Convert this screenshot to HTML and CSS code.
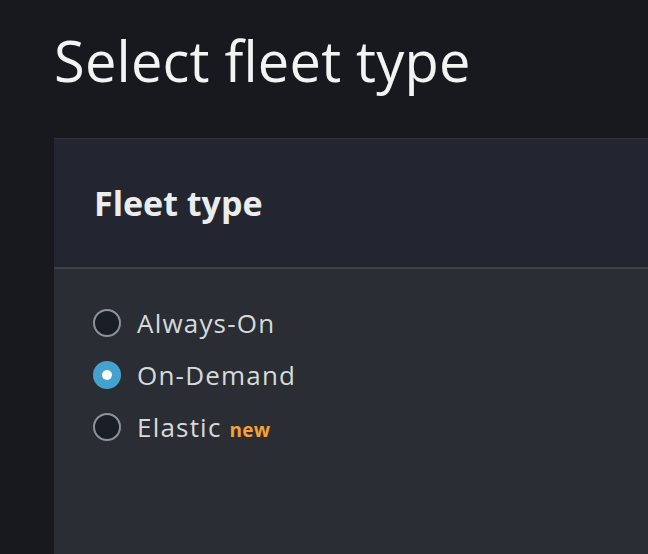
FILE: index.html
```html
<!DOCTYPE html>
<html>
<head>
<meta charset="utf-8">
<link rel="stylesheet" href="styles.css">
</head>
<body>
<div class="page">
  <h1 class="title">Select fleet type</h1>
  <div class="card">
    <div class="card-header">
      <h2 class="card-title">Fleet type</h2>
    </div>
    <div class="card-body">
      <label class="option">
        <span class="radio"></span>
        <span class="label">Always-On</span>
      </label>
      <label class="option">
        <span class="radio checked"></span>
        <span class="label">On-Demand</span>
      </label>
      <label class="option">
        <span class="radio"></span>
        <span class="label">Elastic <span class="badge">new</span></span>
      </label>
    </div>
  </div>
</div>
</body>
</html>
```

FILE: styles.css
```css
html, body {
  margin: 0;
  padding: 0;
  background: #17191e;
  height: 100%;
  overflow: hidden;
}
body {
  font-family: "Open Sans", "Noto Sans", sans-serif;
  color: #eaeded;
}
.page {
  padding: 20px 0 0 54px;
}
.title {
  margin: 0;
  font-size: 56px;
  font-weight: 500;
  line-height: 80px;
  letter-spacing: 0.2px;
  color: #f2f3f3;
}
.card {
  margin-top: 38px;
  background: #2a2d33;
  border-top: 1px solid #31353b;
  height: 420px;
}
.card-header {
  background: #232630;
  height: 128px;
  display: flex;
  align-items: center;
  padding-left: 40px;
  border-bottom: 2px solid #3c4148;
}
.card-title {
  margin: 0;
  font-size: 34px;
  font-weight: 700;
  letter-spacing: 0;
  color: #eaeded;
}
.card-body {
  padding: 40px 0 0 39px;
  display: flex;
  flex-direction: column;
  gap: 24px;
}
.option {
  display: flex;
  align-items: center;
  height: 28px;
  gap: 16px;
}
.radio {
  width: 24px;
  height: 24px;
  border: 2px solid #8d9399;
  border-radius: 50%;
  background: #1a1f27;
}
.radio.checked {
  border-color: #44a3ce;
  background: #44a3ce;
  position: relative;
}
.radio.checked::after {
  content: "";
  position: absolute;
  left: 7px;
  top: 7px;
  width: 10px;
  height: 10px;
  border-radius: 50%;
  background: #ffffff;
}
.label {
  font-size: 26px;
  font-weight: 500;
  letter-spacing: 1.2px;
  color: #d5dbdb;
}
.badge {
  font-size: 19px;
  font-weight: 700;
  letter-spacing: 0.3px;
  color: #f7a134;
}
```
